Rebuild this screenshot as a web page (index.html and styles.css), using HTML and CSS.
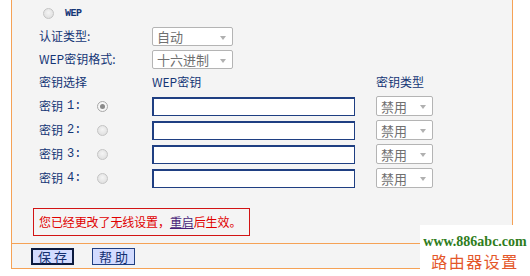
FILE: index.html
```html
<!DOCTYPE html>
<html lang="zh-CN">
<head>
<meta charset="utf-8">
<title>WEP</title>
<link rel="stylesheet" href="styles.css">
</head>
<body>
<div class="frame">
  <div class="content">
    <div class="row row-wep">
      <span class="radio"></span>
      <span class="wep-label">WEP</span>
    </div>
    <div class="grid">
      <div class="lbl span2 r-auth">认证类型:</div>
      <div class="cell r-auth"><span class="sel sel-wide">自动<i class="arrow"></i></span></div>
      <div class="lbl span2 r-fmt">WEP密钥格式:</div>
      <div class="cell r-fmt"><span class="sel sel-wide">十六进制<i class="arrow"></i></span></div>

      <div class="lbl span2 r-head">密钥选择</div>
      <div class="lbl r-head">WEP密钥</div>
      <div class="lbl r-head">密钥类型</div>

      <div class="lbl r-key">密钥 <span class="num">1:</span></div>
      <div class="cell r-key"><span class="radio checked"></span></div>
      <div class="cell r-key"><input class="key" type="text"></div>
      <div class="cell r-key"><span class="sel sel-small">禁用<i class="arrow"></i></span></div>

      <div class="lbl r-key">密钥 <span class="num">2:</span></div>
      <div class="cell r-key"><span class="radio"></span></div>
      <div class="cell r-key"><input class="key" type="text"></div>
      <div class="cell r-key"><span class="sel sel-small">禁用<i class="arrow"></i></span></div>

      <div class="lbl r-key">密钥 <span class="num">3:</span></div>
      <div class="cell r-key"><span class="radio"></span></div>
      <div class="cell r-key"><input class="key" type="text"></div>
      <div class="cell r-key"><span class="sel sel-small">禁用<i class="arrow"></i></span></div>

      <div class="lbl r-key">密钥 <span class="num">4:</span></div>
      <div class="cell r-key"><span class="radio"></span></div>
      <div class="cell r-key"><input class="key" type="text"></div>
      <div class="cell r-key"><span class="sel sel-small">禁用<i class="arrow"></i></span></div>
    </div>
    <div class="notice">您已经更改了无线设置，<a class="reboot" href="#">重启</a>后生效。</div>
  </div>
  <div class="buttons">
    <button class="btn btn-default" type="button">保 存</button>
    <button class="btn" type="button">帮 助</button>
  </div>
</div>
<div class="watermark">
  <div class="wm-url">www.886abc.com</div>
  <div class="wm-cn">路由器设置</div>
</div>
</body>
</html>
```

FILE: styles.css
```css
html, body {
  margin: 0;
  padding: 0;
  background: #ffffff;
  width: 530px;
  height: 276px;
  overflow: hidden;
  font-family: "Noto Sans CJK SC", "Liberation Sans", sans-serif;
  font-size: 12px;
  color: #143676;
}

.frame {
  margin-left: 11px;
  width: 500px;
  border-left: 1px solid #f5a256;
  border-right: 1px solid #f5a256;
  background: #f4f4f4;
}

.content {
  border-bottom: 1px solid #f5a256;
  padding-left: 27px;
  padding-bottom: 7px;
}

.row-wep {
  height: 27px;
  display: flex;
  align-items: center;
  padding-left: 4px;
}

.wep-label {
  font-family: "Liberation Mono", monospace;
  font-weight: bold;
  font-size: 10px;
  margin-left: 11px;
  letter-spacing: -0.5px;
}

.grid {
  display: grid;
  grid-template-columns: 58px 55px 224px 1fr;
  grid-auto-rows: auto;
  align-items: center;
}

.lbl, .cell {
  display: flex;
  align-items: center;
  line-height: 1;
}

.span2 { grid-column: span 2; }

.r-auth { height: 19px; }
.r-fmt { height: 19px; margin-top: 4px; }
.r-fmt.lbl, .r-auth.lbl { padding-bottom: 2px; box-sizing: border-box; }
.r-head { height: 25px; padding-bottom: 0; box-sizing: border-box; }
.r-key { height: 24px; }

.r-auth.cell, .r-fmt.cell { grid-column: span 2; }

.num {
  font-family: "Liberation Mono", monospace;
  font-size: 12px;
  margin-left: 4px;
}

.radio {
  display: inline-block;
  box-sizing: border-box;
  width: 11px;
  height: 11px;
  border-radius: 50%;
  border: 1px solid #c4c4c4;
  background: radial-gradient(circle at 50% 40%, #f4f4f4 0%, #e2e2e2 70%, #d6d6d6 100%);
  position: relative;
}

.radio.checked {
  border-color: #a8a8a8;
  background: #f6f6f6;
}

.radio.checked::after {
  content: "";
  position: absolute;
  left: 2px;
  top: 2px;
  width: 5px;
  height: 5px;
  border-radius: 50%;
  background: #8a8a8a;
}

.sel {
  position: relative;
  display: inline-flex;
  align-items: center;
  box-sizing: border-box;
  height: 19px;
  border: 1px solid #b4b4b4;
  border-radius: 2px;
  background: #ffffff;
  color: #707070;
  font-size: 13px;
  padding-left: 4px;
}

.sel-wide { width: 81px; }
.sel-small { width: 57px; height: 20px; }

.arrow {
  position: absolute;
  right: 6px;
  top: 50%;
  margin-top: -1px;
  width: 0;
  height: 0;
  border-left: 3px solid transparent;
  border-right: 3px solid transparent;
  border-top: 4px solid #b0b0b0;
}

.key {
  box-sizing: border-box;
  width: 203px;
  height: 19px;
  margin: 0;
  padding: 0 2px;
  border: 1px solid #1f3f82;
  border-top-width: 2px;
  border-left-width: 2px;
  background: #ffffff;
  outline: none;
}

.notice {
  margin-top: 18px;
  margin-left: -6px;
  width: 217px;
  height: 28px;
  box-sizing: border-box;
  border: 1px solid #d21414;
  display: flex;
  align-items: center;
  padding-left: 5px;
  color: #e00000;
  font-size: 12px;
  line-height: 1;
  letter-spacing: -0.1px;
}

.reboot {
  color: #4a1f7a;
  text-decoration: underline;
}

.buttons {
  border-bottom: 1px solid #f5a256;
  height: 25px;
  display: flex;
  align-items: center;
  gap: 18px;
  padding-left: 19px;
  box-sizing: border-box;
}

.btn {
  box-sizing: border-box;
  width: 43px;
  height: 17px;
  margin: 0;
  padding: 0;
  border: 1px solid #1f3f82;
  background: #d2dbff;
  color: #122f70;
  font-family: "Noto Sans CJK SC", sans-serif;
  font-size: 13px;
  line-height: 1;
}

.btn-default {
  border: 2px solid #0b1a3e;
}

.watermark {
  position: absolute;
  left: 420px;
  top: 225px;
  width: 110px;
  height: 51px;
  background: #ffffff;
  text-align: center;
}

.wm-url {
  margin-top: 10px;
  font-family: "Liberation Serif", serif;
  font-weight: bold;
  font-size: 14px;
  color: #2f7d1c;
  line-height: 14px;
}

.wm-cn {
  margin-top: 3px;
  font-family: "Noto Sans CJK SC", sans-serif;
  font-size: 16px;
  letter-spacing: 1.5px;
  color: #e4572a;
  line-height: 18px;
}
```
